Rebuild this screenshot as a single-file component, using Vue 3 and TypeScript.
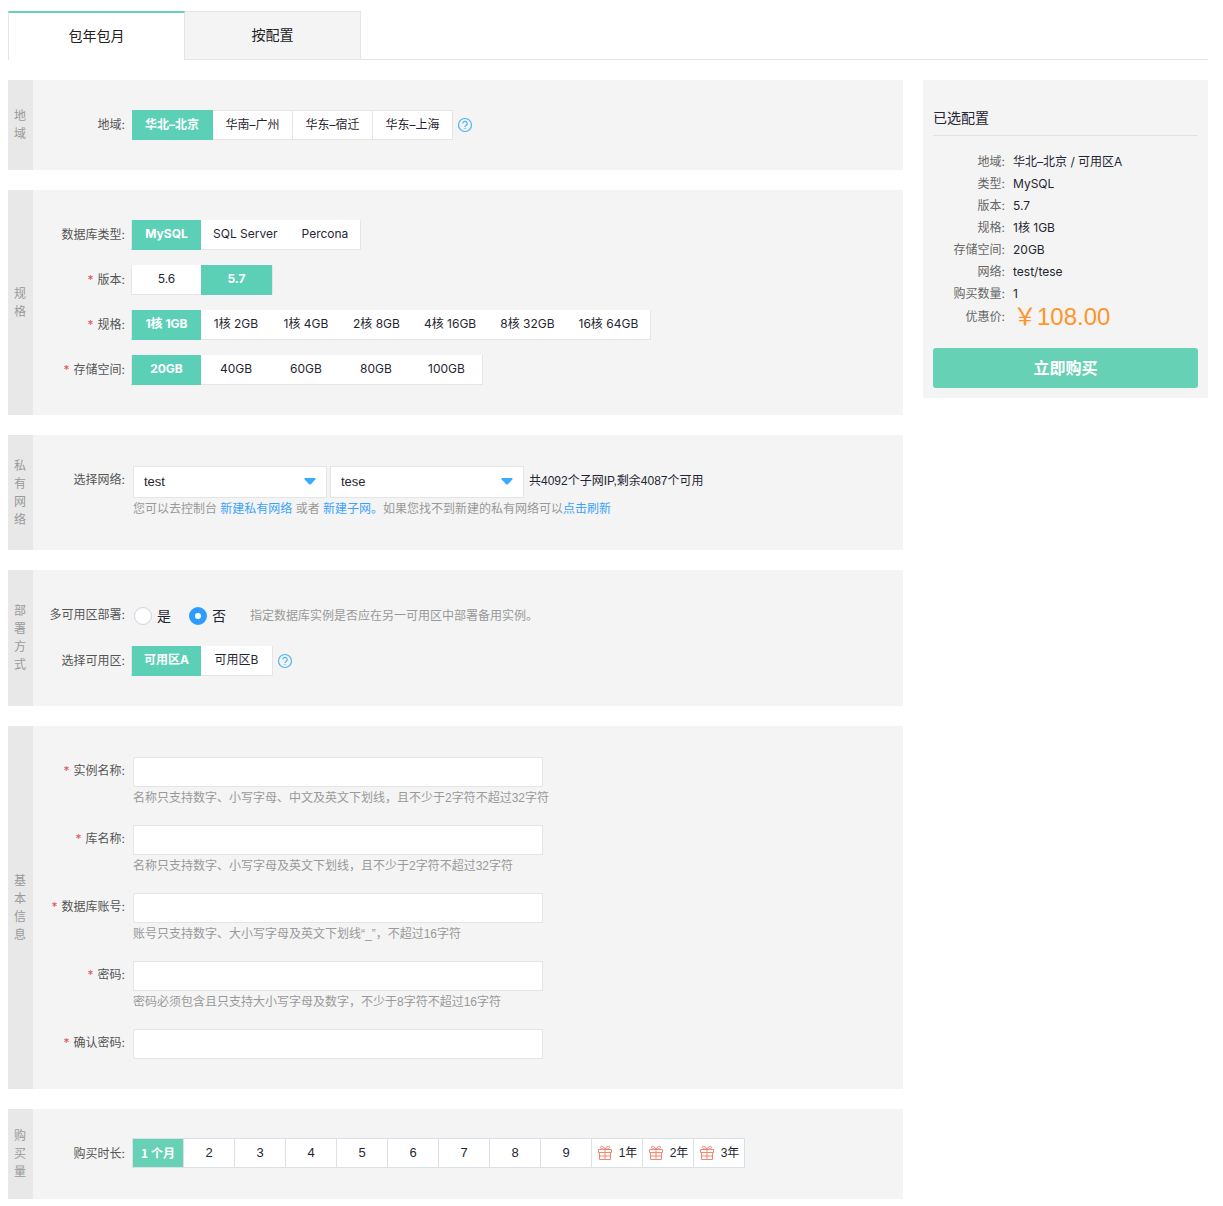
<script setup lang="ts">
import { reactive, ref } from 'vue'

interface SpecRow {
  key: 'engine' | 'version' | 'size' | 'storage'
  label: string
  required: boolean
  options: string[]
}

interface Field {
  id: string
  label: string
  type: string
  hint?: string
}

const billing = ref('包年包月')
const tabs = ['包年包月', '按配置']

const region = ref('华北–北京')
const regions = ['华北–北京', '华南–广州', '华东–宿迁', '华东–上海']

const spec = reactive({ engine: 'MySQL', version: '5.7', size: '1核 1GB', storage: '20GB' })
const specRows: SpecRow[] = [
  { key: 'engine', label: '数据库类型', required: false, options: ['MySQL', 'SQL Server', 'Percona'] },
  { key: 'version', label: '版本', required: true, options: ['5.6', '5.7'] },
  {
    key: 'size',
    label: '规格',
    required: true,
    options: ['1核 1GB', '1核 2GB', '1核 4GB', '2核 8GB', '4核 16GB', '8核 32GB', '16核 64GB'],
  },
  { key: 'storage', label: '存储空间', required: true, options: ['20GB', '40GB', '60GB', '80GB', '100GB'] },
]

const network = ref('test')
const subnet = ref('tese')

const multiZone = ref('否')
const zone = ref('可用区A')
const zones = ['可用区A', '可用区B']

const fields: Field[] = [
  { id: 'instance', label: '实例名称', type: 'text', hint: '名称只支持数字、小写字母、中文及英文下划线，且不少于2字符不超过32字符' },
  { id: 'database', label: '库名称', type: 'text', hint: '名称只支持数字、小写字母及英文下划线，且不少于2字符不超过32字符' },
  { id: 'account', label: '数据库账号', type: 'text', hint: '账号只支持数字、大小写字母及英文下划线“_”，不超过16字符' },
  { id: 'password', label: '密码', type: 'password', hint: '密码必须包含且只支持大小写字母及数字，不少于8字符不超过16字符' },
  { id: 'confirm', label: '确认密码', type: 'password' },
]
const values = reactive<Record<string, string>>({ instance: '', database: '', account: '', password: '', confirm: '' })

const duration = ref('1 个月')
const durations = ['1 个月', '2', '3', '4', '5', '6', '7', '8', '9', '1年', '2年', '3年']
</script>

<template>
  <div class="page" lang="zh-CN">
    <nav class="tabs">
      <button v-for="t in tabs" :key="t" type="button" class="tab" :class="{ on: billing === t }" @click="billing = t">{{ t }}</button>
    </nav>

    <div class="layout">
      <main class="form">
        <section class="block">
          <h2 class="side"><span>地域</span></h2>
          <div class="rows">
            <div class="row">
              <span class="label">地域:</span>
              <div class="boxes">
                <button v-for="r in regions" :key="r" type="button" class="box" :class="{ on: region === r }" @click="region = r">{{ r }}</button>
              </div>
              <svg class="help" viewBox="0 0 16 16" fill="none" stroke="currentColor">
                <circle cx="8" cy="8" r="6.500" stroke-width="1.200" />
                <path d="M5.800 6.600a2.200 2.200 0 1 1 3.300 1.900C8.300 8.900 8 9.100 8 9.900M8 10.900v1.200" stroke-width="1.200" />
              </svg>
            </div>
          </div>
        </section>

        <section class="block">
          <h2 class="side"><span>规格</span></h2>
          <div class="rows">
            <div v-for="row in specRows" :key="row.key" class="row">
              <span class="label"><i v-if="row.required">*</i>{{ row.label }}:</span>
              <div class="segment">
                <button
                  v-for="o in row.options"
                  :key="o"
                  type="button"
                  class="seg"
                  :class="{ on: spec[row.key] === o }"
                  @click="spec[row.key] = o"
                >{{ o }}</button>
              </div>
            </div>
          </div>
        </section>

        <section class="block">
          <h2 class="side"><span>私有网络</span></h2>
          <div class="rows">
            <div class="row">
              <label class="label" for="network">选择网络:</label>
              <div class="field">
                <div class="selects">
                  <div class="select">
                    <select id="network" v-model="network"><option>test</option></select>
                    <svg viewBox="0 0 12 7"><path d="M1.200 0h9.600q1.400.3.500 1.500L7.200 6q-1.200 1.200-2.400 0L.7 1.500Q-.2.3 1.200 0z" /></svg>
                  </div>
                  <div class="select">
                    <select v-model="subnet" aria-label="子网"><option>tese</option></select>
                    <svg viewBox="0 0 12 7"><path d="M1.200 0h9.600q1.400.3.500 1.500L7.200 6q-1.200 1.200-2.400 0L.7 1.500Q-.2.3 1.200 0z" /></svg>
                  </div>
                  <span class="remain">共4092个子网IP,剩余4087个可用</span>
                </div>
                <p class="hint">您可以去控制台 <a href="#vpc">新建私有网络</a> 或者 <a href="#subnet">新建子网。</a>如果您找不到新建的私有网络可以<a href="#refresh">点击刷新</a></p>
              </div>
            </div>
          </div>
        </section>

        <section class="block">
          <h2 class="side"><span>部署方式</span></h2>
          <div class="rows">
            <div class="row">
              <span class="label">多可用区部署:</span>
              <div class="radios">
                <label class="radio"><input v-model="multiZone" type="radio" name="multi-zone" value="是">是</label>
                <label class="radio"><input v-model="multiZone" type="radio" name="multi-zone" value="否">否</label>
                <span class="note">指定数据库实例是否应在另一可用区中部署备用实例。</span>
              </div>
            </div>
            <div class="row">
              <span class="label">选择可用区:</span>
              <div class="segment">
                <button v-for="z in zones" :key="z" type="button" class="seg" :class="{ on: zone === z }" @click="zone = z">{{ z }}</button>
              </div>
              <svg class="help" viewBox="0 0 16 16" fill="none" stroke="currentColor">
                <circle cx="8" cy="8" r="6.500" stroke-width="1.200" />
                <path d="M5.800 6.600a2.200 2.200 0 1 1 3.300 1.900C8.300 8.900 8 9.100 8 9.900M8 10.900v1.200" stroke-width="1.200" />
              </svg>
            </div>
          </div>
        </section>

        <section class="block">
          <h2 class="side"><span>基本信息</span></h2>
          <div class="rows">
            <div v-for="f in fields" :key="f.id" class="row">
              <label class="label" :for="f.id"><i>*</i>{{ f.label }}:</label>
              <div class="field">
                <input :id="f.id" v-model="values[f.id]" class="text" :type="f.type">
                <p v-if="f.hint" class="hint">{{ f.hint }}</p>
              </div>
            </div>
          </div>
        </section>

        <section class="block">
          <h2 class="side"><span>购买量</span></h2>
          <div class="rows">
            <div class="row">
              <span class="label">购买时长:</span>
              <div class="months">
                <button v-for="d in durations" :key="d" type="button" class="month" :class="{ on: duration === d }" @click="duration = d">
                  <svg v-if="d.endsWith('年')" class="gift" viewBox="0 0 16 16" fill="none" stroke="currentColor">
                    <path d="M1.500 4.500h13v3h-13zM2.500 7.500v7h11v-7M8 4.500v10M2.500 11h11M8 4.200C6.500 1 3.500.5 3.500 2.500c0 1.300 2 1.700 4.500 1.700M8 4.200C9.500 1 12.500.5 12.500 2.500c0 1.300-2 1.700-4.500 1.700" />
                  </svg>
                  <span>{{ d }}</span>
                </button>
              </div>
            </div>
          </div>
        </section>
      </main>

      <aside class="summary">
        <h3>已选配置</h3>
        <dl>
          <div><dt>地域:</dt><dd>{{ region }} / {{ zone }}</dd></div>
          <div><dt>类型:</dt><dd>{{ spec.engine }}</dd></div>
          <div><dt>版本:</dt><dd>{{ spec.version }}</dd></div>
          <div><dt>规格:</dt><dd>{{ spec.size }}</dd></div>
          <div><dt>存储空间:</dt><dd>{{ spec.storage }}</dd></div>
          <div><dt>网络:</dt><dd>{{ network }}/{{ subnet }}</dd></div>
          <div><dt>购买数量:</dt><dd>1</dd></div>
          <div class="total"><dt>优惠价:</dt><dd class="price">￥108.00</dd></div>
        </dl>
        <button type="button" class="buy">立即购买</button>
      </aside>
    </div>
  </div>
</template>

<style>
body {
  margin: 0;
  background: #fff;
}
</style>

<style scoped>
.page {
  padding: 11px 15px 7px 8px;
  font: 12px/22px Inter, "Noto Sans CJK SC", sans-serif;
  color: #1f2633;
}
.page * {
  box-sizing: border-box;
}
h2,
h3,
p,
dl,
dd {
  margin: 0;
  font-weight: 400;
}
button {
  margin: 0;
  padding: 0;
  border: 0;
  background: #fff;
  color: inherit;
  font: inherit;
  white-space: nowrap;
  cursor: pointer;
}
.tabs {
  display: flex;
  height: 49px;
  border-bottom: 1px solid #e5e5e5;
}
.tab {
  width: 176px;
  height: 48px;
  padding-bottom: 2px;
  border: 1px solid #e5e5e5;
  border-width: 1px 1px 0 0;
  background: #f4f4f4;
  font-size: 14px;
  color: #222;
}
.tab.on {
  width: 177px;
  height: 49px;
  border-width: 2px 1px 0 1px;
  border-top-color: #67d1b5;
  background: #fff;
}
.layout {
  display: flex;
  align-items: flex-start;
  gap: 20px;
  margin-top: 20px;
}
.form {
  flex: 1;
  min-width: 0;
  display: flex;
  flex-direction: column;
  gap: 20px;
}
.block {
  display: flex;
  background: #f4f4f4;
}
.side {
  flex: none;
  display: flex;
  align-items: center;
  width: 25px;
  padding: 0 6px;
  background: #e8e8e8;
  font-size: 12px;
  line-height: 18px;
  color: #999;
}
.side span {
  width: 12px;
  word-break: break-all;
}
.rows {
  flex: 1;
  display: flex;
  flex-direction: column;
  gap: 15px;
  padding: 30px 0;
}
.row {
  display: flex;
  align-items: flex-start;
}
.label {
  flex: none;
  width: 100px;
  padding-right: 8px;
  line-height: 30px;
  text-align: right;
  white-space: nowrap;
  color: #555;
}
.label i {
  margin-right: 4px;
  font-style: normal;
  color: #e25555;
}
.boxes,
.segment,
.months {
  display: flex;
  margin-left: -1px;
}
.box {
  min-width: 80px;
  height: 30px;
  padding: 0 11px;
  border: 1px solid #e5e5e5;
  border-left: 0;
}
.box.on,
.seg.on {
  border-color: #5cd0b6;
  background: #5cd0b6;
  color: #fff;
  font-weight: 700;
}
.box.on {
  width: 81px;
}
.segment {
  margin-left: -2px;
  border-right: 1px solid #e5e5e5;
}
.seg {
  min-width: 70px;
  height: 30px;
  padding: 0 12px 2px;
  border-bottom: 1px solid #e5e5e5;
}
.seg:first-child {
  border-left: 1px solid #e5e5e5;
}
.seg:last-child {
  min-width: 71px;
}
.help {
  width: 16px;
  height: 16px;
  margin: 7px 0 0 4px;
  color: #4fb3f6;
}
.field {
  padding-top: 1px;
}
.selects {
  display: flex;
  gap: 3px;
}
.select {
  position: relative;
  width: 194px;
}
.select select {
  display: block;
  width: 100%;
  height: 32px;
  padding: 0 10px 2px;
  border: 1px solid #e5e5e5;
  border-radius: 0;
  background: #fff;
  color: #1f2633;
  font: 13px "Liberation Sans", sans-serif;
  appearance: none;
}
.select svg {
  position: absolute;
  top: 12px;
  right: 11px;
  width: 12px;
  height: 7px;
  fill: #38adff;
  pointer-events: none;
}
.remain {
  margin-left: 2px;
  font-family: "Liberation Sans", "Noto Sans CJK SC", sans-serif;
  line-height: 30px;
}
.hint,
.note {
  font-family: "Liberation Sans", "Noto Sans CJK SC", sans-serif;
  color: #999;
}
.hint a {
  color: #3ba3fb;
  text-decoration: none;
}
.radios {
  display: flex;
  align-items: center;
  height: 31px;
  padding-left: 1px;
}
.radio {
  display: flex;
  align-items: center;
  gap: 5px;
  margin-right: 18px;
  font-size: 14px;
}
.radio input {
  width: 18px;
  height: 18px;
  margin: 0;
  border: 1px solid #cdd3e0;
  border-radius: 50%;
  background: #fff;
  appearance: none;
}
.radio input:checked {
  border: 6px solid #2d9cff;
}
.note {
  margin-left: 6px;
}
.text {
  display: block;
  width: 410px;
  height: 30px;
  padding: 0 10px;
  border: 1px solid #e5e5e5;
  font: 13px "Liberation Sans", sans-serif;
}
.months {
  margin-top: -1px;
  border-left: 1px solid #dbe0e6;
}
.month {
  display: flex;
  align-items: center;
  justify-content: center;
  gap: 6px;
  width: 51px;
  height: 30px;
  border: 1px solid #dbe0e6;
  border-left: 0;
  font-family: "Liberation Sans", "Noto Sans CJK SC", sans-serif;
  font-size: 13px;
}
.month:nth-child(n + 10) {
  font-size: 12px;
}
.month.on {
  background: #67d1b5;
  color: #fff;
  font-family: "Noto Sans CJK SC", sans-serif;
  font-size: 12px;
  font-weight: 700;
}
.gift {
  width: 16px;
  height: 16px;
  color: #f68672;
}
.summary {
  flex: none;
  width: 285px;
  padding: 20px 10px 10px;
  background: #f4f4f4;
}
.summary h3 {
  border-bottom: 1px solid #e2e2e2;
  font-size: 14px;
  line-height: 35px;
}
.summary dl {
  padding: 15px 0 20px;
}
.summary dl div {
  display: flex;
}
.summary dt {
  width: 80px;
  padding-right: 8px;
  text-align: right;
  color: #666;
}
.summary .total {
  line-height: 23px;
}
.summary .price {
  font-family: "Liberation Sans", "Noto Sans CJK SC", sans-serif;
  font-size: 24px;
  color: #ff9429;
}
.buy {
  width: 100%;
  height: 40px;
  border-radius: 3px;
  background: #67d1b5;
  color: #fff;
  font-size: 16px;
  font-weight: 700;
}
</style>
